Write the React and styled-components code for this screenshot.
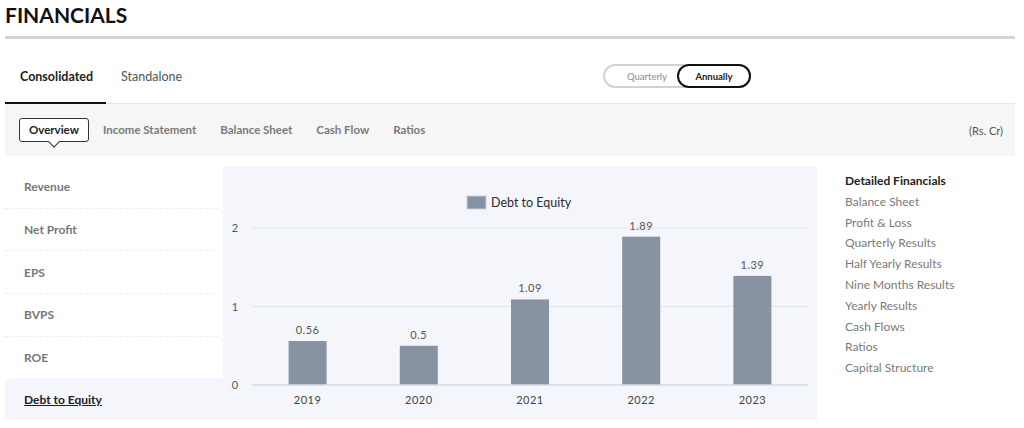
import React from "react";
import styled, { createGlobalStyle } from "styled-components";

const GlobalStyle = createGlobalStyle`
  body {
    margin: 0;
    background: #fff;
    font-family: Lato, "Open Sans", Arial, sans-serif;
  }
`;

const Page = styled.div`
  width: 1010px;
  margin-left: 5px;
`;

const Title = styled.h1`
  margin: 0;
  padding-top: 2px;
  height: 34px;
  font-size: 21px;
  line-height: 26px;
  font-weight: 700;
  color: #111;
  border-bottom: 3px solid #d3d3d3;
`;

const TabsRow = styled.div`
  display: flex;
  align-items: flex-end;
  height: 64px;
  border-bottom: 1px solid #e6e6e6;
`;

const Tab = styled.div`
  padding: 0 13px 17px 15px;
  font-size: 12.5px;
  line-height: 16px;
  font-weight: ${(p) => (p.active ? 700 : 400)};
  color: ${(p) => (p.active ? "#222" : "#555")};
  border-bottom: 2px solid ${(p) => (p.active ? "#111" : "transparent")};
  margin-bottom: -1px;
`;

const Toggle = styled.div`
  display: flex;
  align-self: center;
  margin: 10px 264px 0 auto;
  width: 148px;
  height: 24px;
  box-sizing: border-box;
  border: 2px solid #d2d2d2;
  border-radius: 13px;
`;

const ToggleBtn = styled.div`
  flex: ${(p) => (p.active ? "0 0 74px" : "1")};
  box-sizing: border-box;
  display: flex;
  align-items: center;
  justify-content: center;
  padding-left: ${(p) => (p.active ? "0" : "12px")};
  margin: ${(p) => (p.active ? "-2px -2px -2px 0" : "0")};
  border: 2px solid ${(p) => (p.active ? "#111" : "transparent")};
  border-radius: 13px;
  font-size: 9.5px;
  font-weight: ${(p) => (p.active ? 700 : 400)};
  color: ${(p) => (p.active ? "#222" : "#8a8a8a")};
`;

const SubBar = styled.div`
  display: flex;
  align-items: center;
  height: 52px;
  padding: 0 12px 0 14px;
  background: #f6f6f6;
`;

const SubTab = styled.div`
  position: relative;
  padding: 4px ${(p) => (p.active ? "9px" : "11px")};
  margin-right: ${(p) => (p.active ? "2px" : "0")};
  font-size: 11.5px;
  line-height: 14px;
  font-weight: 700;
  color: ${(p) => (p.active ? "#222" : "#7a7a7a")};
  background: ${(p) => (p.active ? "#fff" : "transparent")};
  border: 1px solid ${(p) => (p.active ? "#333" : "transparent")};
  border-radius: 3px;

  ${(p) =>
    p.active &&
    `
    &::after {
      content: "";
      position: absolute;
      left: 50%;
      bottom: -5px;
      width: 7px;
      height: 7px;
      margin-left: -4px;
      background: #fff;
      border-right: 1px solid #333;
      border-bottom: 1px solid #333;
      transform: rotate(45deg);
    }
  `}
`;

const Unit = styled.div`
  margin-left: auto;
  font-size: 11px;
  color: #555;
`;

const Main = styled.div`
  display: flex;
  height: 254px;
  margin-top: 10px;
`;

const Menu = styled.div`
  width: 218px;
  display: flex;
  flex-direction: column;
`;

const MenuItem = styled.div`
  flex: 1;
  display: flex;
  align-items: center;
  padding-left: 19px;
  font-size: 12px;
  font-weight: 700;
  color: ${(p) => (p.active ? "#222" : "#777")};
  text-decoration: ${(p) => (p.active ? "underline" : "none")};
  background: ${(p) => (p.active ? "#f4f6fb" : "transparent")};
  border-radius: ${(p) => (p.active ? "6px 0 0 6px" : "0")};
  border-bottom: ${(p) => (p.last ? "none" : "1px dashed #eeeeee")};
  margin-right: ${(p) => (p.active ? "0" : "5px")};
`;

const ChartPanel = styled.div`
  width: 594px;
  background: #f4f6fb;
`;

const Side = styled.div`
  padding: 5px 0 0 28px;
  font-size: 12px;
  line-height: 20.8px;
  color: #7a7a7a;
`;

const SideTitle = styled.div`
  font-weight: 700;
  color: #222;
`;

const SideLink = styled.div``;

const data = [
  { year: "2019", v: 0.56 },
  { year: "2020", v: 0.5 },
  { year: "2021", v: 1.09 },
  { year: "2022", v: 1.89 },
  { year: "2023", v: 1.39 },
];

function Chart() {
  const x0 = 29;
  const x1 = 585;
  const y0 = 219;
  const unit = 78.5;
  const step = (x1 - x0) / data.length;
  const bar = 38;
  return (
    <svg width="594" height="254" style={{ display: "block" }}>
      <rect x="244" y="30" width="19" height="13" fill="#8792a2" stroke="#c9cfd8" strokeWidth="1" />
      <text x="268" y="41" fontSize="12.5" fill="#2a2a2a" fontFamily="Lato, sans-serif">
        Debt to Equity
      </text>
      {[1, 2].map((g) => (
        <line key={g} x1={x0} x2={x1} y1={y0 - g * unit} y2={y0 - g * unit} stroke="#e1e5ec" strokeWidth="1" />
      ))}
      {[0, 1, 2].map((g) => (
        <text key={g} x="12" y={y0 - g * unit + 4} fontSize="11" fill="#555" textAnchor="middle" fontFamily="Lato, sans-serif">
          {g}
        </text>
      ))}
      {data.map((d, i) => {
        const cx = x0 + step * (i + 0.5);
        const h = d.v * unit;
        return (
          <g key={d.year}>
            <rect x={cx - bar / 2} y={y0 - h} width={bar} height={h} fill="#8792a2" />
            <text x={cx} y={y0 - h - 7} fontSize="11" fill="#555" textAnchor="middle" letterSpacing="0.5" fontFamily="Lato, sans-serif">
              {d.v}
            </text>
            <text x={cx} y={238} fontSize="11" fill="#444" textAnchor="middle" letterSpacing="0.5" fontFamily="Lato, sans-serif">
              {d.year}
            </text>
          </g>
        );
      })}
      <line x1={x0} x2={x1} y1={y0} y2={y0} stroke="#d6dbe4" strokeWidth="1.5" />
    </svg>
  );
}

const menu = ["Revenue", "Net Profit", "EPS", "BVPS", "ROE", "Debt to Equity"];
const links = [
  "Balance Sheet",
  "Profit & Loss",
  "Quarterly Results",
  "Half Yearly Results",
  "Nine Months Results",
  "Yearly Results",
  "Cash Flows",
  "Ratios",
  "Capital Structure",
];

export default function App() {
  return (
    <Page>
      <GlobalStyle />
      <Title>FINANCIALS</Title>
      <TabsRow>
        <Tab active>Consolidated</Tab>
        <Tab>Standalone</Tab>
        <Toggle>
          <ToggleBtn>Quarterly</ToggleBtn>
          <ToggleBtn active>Annually</ToggleBtn>
        </Toggle>
      </TabsRow>
      <SubBar>
        <SubTab active>Overview</SubTab>
        <SubTab>Income Statement</SubTab>
        <SubTab>Balance Sheet</SubTab>
        <SubTab>Cash Flow</SubTab>
        <SubTab>Ratios</SubTab>
        <Unit>(Rs. Cr)</Unit>
      </SubBar>
      <Main>
        <Menu>
          {menu.map((m, i) => (
            <MenuItem key={m} active={i === menu.length - 1} last={i >= menu.length - 2}>
              {m}
            </MenuItem>
          ))}
        </Menu>
        <ChartPanel>
          <Chart />
        </ChartPanel>
        <Side>
          <SideTitle>Detailed Financials</SideTitle>
          {links.map((l) => (
            <SideLink key={l}>{l}</SideLink>
          ))}
        </Side>
      </Main>
    </Page>
  );
}
